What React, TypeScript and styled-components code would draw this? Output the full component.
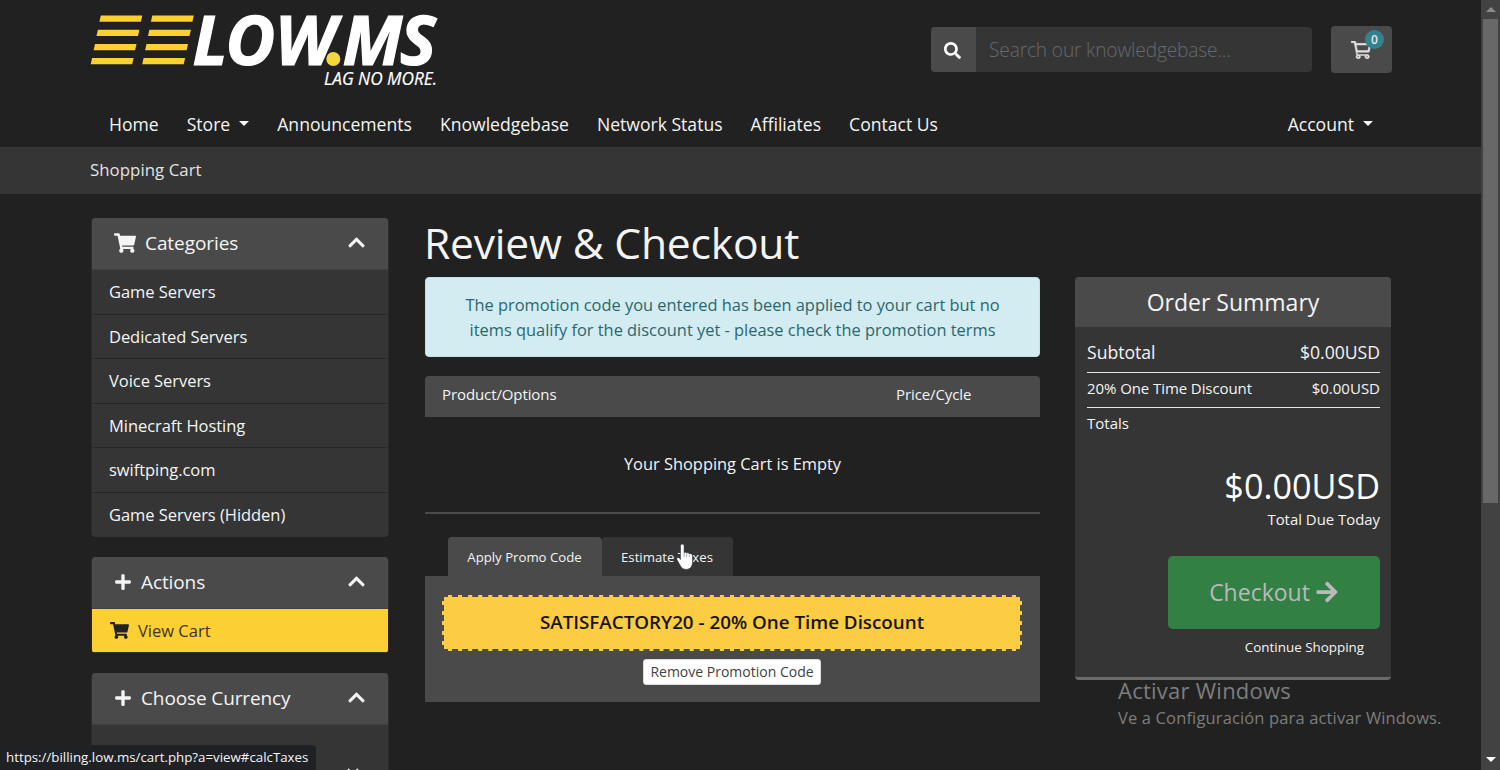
import React from "react";
import styled, { createGlobalStyle, css } from "styled-components";
import {
  FaArrowRight,
  FaChevronUp,
  FaPlus,
  FaSearch,
  FaShoppingCart,
} from "react-icons/fa";

const GlobalStyle = createGlobalStyle`
  *, *::before, *::after { box-sizing: border-box; }
  html, body { margin: 0; padding: 0; background: #212121; overflow: hidden; }
  body { font-family: "Open Sans", "Noto Sans", sans-serif; color: #f4f4f4; }
  h1, h2, p, ul { margin: 0; padding: 0; font-weight: 400; }
  button { font-family: inherit; margin: 0; }
`;

const Window = styled.div`
  position: relative;
  display: flex;
  width: 1500px;
  height: 770px;
  overflow: hidden;
`;

const Page = styled.div`
  flex: 1;
  min-width: 0;
  height: 770px;
  overflow: hidden;
`;

const Label = styled.span<{ $size: number; $track?: number; $weight?: number }>`
  font-size: ${(p) => p.$size}px;
  letter-spacing: ${(p) => p.$track ?? 0}px;
  font-weight: ${(p) => p.$weight ?? 400};
  white-space: nowrap;
`;

/* Header */
const Header = styled.header`
  height: 147px;
  padding: 0 89px 0 90px;
`;

const HeaderTop = styled.div`
  display: flex;
  height: 101px;
`;

const Logo = styled.svg`
  display: block;
  width: 352px;
  height: 96px;
  overflow: visible;
`;

const SearchBox = styled.div`
  display: flex;
  width: 381px;
  height: 45px;
  margin: 27px 19px 0 auto;
  border-radius: 4px;
  overflow: hidden;
  background: #353535;
`;

const SearchButton = styled.button`
  display: flex;
  align-items: center;
  justify-content: center;
  width: 45px;
  padding: 2px 2px 0 0;
  border: 0;
  background: #4a4a4a;
  color: #fff;
  font-size: 17px;
`;

const SearchInput = styled.div`
  flex: 1;
  padding-left: 13px;
  line-height: 45px;
  color: #64696e;
`;

const CartButton = styled.button`
  position: relative;
  width: 61px;
  height: 47px;
  margin-top: 26px;
  padding: 0;
  border: 0;
  border-radius: 4px;
  background: #4a4a4a;
`;

const CartOutline = styled.svg`
  display: block;
  width: 20px;
  height: 18px;
  margin: 0 0 0 20px;
  fill: #e2e2e2;
  stroke: #e2e2e2;
  stroke-width: 14px;
`;

const Badge = styled.span`
  position: absolute;
  left: 34px;
  top: 4px;
  width: 19px;
  height: 19px;
  border-radius: 10px;
  background: #35828f;
  color: #dcebed;
  font-size: 12px;
  font-weight: 600;
  line-height: 19px;
  text-align: center;
`;

const Nav = styled.nav`
  display: flex;
  align-items: center;
  gap: 28px;
  height: 46px;
  padding: 0 19px;
`;

const NavItem = styled.a<{ $end?: boolean }>`
  display: flex;
  align-items: center;
  line-height: 46px;
  ${(p) => p.$end && css`margin-left: auto;`}
`;

const Caret = styled.i`
  width: 0;
  height: 0;
  margin-left: 9px;
  margin-top: -1px;
  border: 5px solid transparent;
  border-top-color: #f4f4f4;
  border-bottom-width: 0;
`;

const Breadcrumb = styled.div`
  height: 47px;
  padding-left: 90px;
  background: #353535;
  color: #e3e3e3;
  line-height: 46px;
`;

/* Body */
const Body = styled.main`
  display: flex;
  align-items: flex-start;
  padding: 24px 0 0 91px;
`;

const Sidebar = styled.aside`
  display: flex;
  flex-direction: column;
  gap: 20px;
  width: 298px;
`;

const Card = styled.section<{ $height: number }>`
  flex: none;
  height: ${(p) => p.$height}px;
  border: solid #2b2b2b;
  border-width: 0 1px;
  border-radius: 4px;
  overflow: hidden;
  background: #353535;
`;

const CardHead = styled.div`
  display: flex;
  align-items: center;
  height: 52px;
  padding: 0 22px 2px 22px;
  border-bottom: 1px solid #414141;
  background: #4a4a4a;

  > svg:first-child { margin-right: 9px; }
  > svg:last-child { margin-left: auto; }
`;

const Entry = styled.div<{ $active?: boolean }>`
  display: flex;
  align-items: center;
  gap: 9px;
  height: 44.5px;
  padding: 0 17px;
  border-bottom: 1px solid #272727;
  ${(p) =>
    p.$active &&
    css`
      height: 43px;
      padding-left: 18px;
      border: 0;
      background: #fccf33;
      color: #3d3616;
      > svg { color: #222; }
    `}
  &:last-child { border-bottom: 0; }
`;

const SelectBox = styled.div`
  display: flex;
  justify-content: flex-end;
  padding: 42px 29px 0;
`;

const Center = styled.div`
  width: 615px;
  margin-left: 36px;
`;

const Title = styled.h1`
  height: 59px;
  margin-left: -1px;
  line-height: 48px;
  white-space: nowrap;
`;

const Alert = styled.div`
  display: flex;
  flex-direction: column;
  align-items: center;
  height: 80px;
  padding-top: 15px;
  border: 1px solid #bfe3ea;
  border-radius: 4px;
  background: #d2ecf1;
  color: #2b676e;
  line-height: 24.5px;
`;

const TableHead = styled.div`
  display: grid;
  grid-template-columns: 454px 1fr;
  height: 41px;
  margin-top: 19px;
  padding-left: 17px;
  border-radius: 4px 4px 0 0;
  background: #4a4a4a;
  line-height: 37px;
`;

const EmptyCart = styled.div`
  height: 97px;
  border-bottom: 2px solid #4a4a4a;
  line-height: 94px;
  text-align: center;
`;

const Tabs = styled.div`
  display: flex;
  height: 39px;
  margin-top: 23px;
  padding-left: 23px;
`;

const Tab = styled.div<{ $width: number; $active?: boolean }>`
  width: ${(p) => p.$width}px;
  padding-right: 1px;
  border-radius: 4px 4px 0 0;
  background: ${(p) => (p.$active ? "#4a4a4a" : "#353535")};
  line-height: 39px;
  text-align: center;
`;

const PromoPanel = styled.div`
  display: flex;
  flex-direction: column;
  align-items: center;
  gap: 8px;
  height: 126px;
  padding: 19px 1px 0 0;
  background: #4a4a4a;
`;

const PromoCode = styled.div`
  width: 580px;
  height: 56px;
  border: 2px dashed #4a4a4a;
  background: #fccc42;
  color: #171510;
  line-height: 51px;
  text-align: center;
`;

const RemoveButton = styled.button`
  width: 178px;
  height: 26px;
  padding: 0;
  border: 1px solid #ddd;
  border-radius: 3px;
  background: #fff;
  color: #3f3f3f;
  line-height: 22px;
`;

const Summary = styled.section`
  width: 316px;
  height: 403px;
  margin: 59px 0 0 35px;
  border-bottom: 3px solid #6b6b6b;
  border-radius: 4px;
  overflow: hidden;
  background: #353535;
`;

const SummaryTitle = styled.h2`
  height: 50px;
  background: #4a4a4a;
  line-height: 50px;
  text-align: center;
`;

const SummaryBody = styled.div`
  padding: 10px 11px 0 12px;
`;

const SummaryRow = styled.div<{ $height: number; $line: number }>`
  display: flex;
  justify-content: space-between;
  height: ${(p) => p.$height}px;
  border-bottom: 1px solid #e6e6e6;
  line-height: ${(p) => p.$line}px;
`;

const TotalsLabel = styled.div`
  height: 53px;
  line-height: 31px;
`;

const TotalDue = styled.div`
  display: flex;
  flex-direction: column;
  align-items: flex-end;
  height: 95px;

  > :first-child { line-height: 50px; color: #fff; }
  > :last-child { line-height: 17px; }
`;

const CheckoutButton = styled.button`
  display: flex;
  align-items: center;
  justify-content: center;
  gap: 5px;
  width: 212px;
  height: 73px;
  margin-left: auto;
  padding: 0 0 2px;
  border: 0;
  border-radius: 5px;
  background: #338045;
  color: #bababa;
`;

const ContinueLink = styled.div`
  padding-right: 16px;
  line-height: 35px;
  text-align: right;
`;

/* Overlays */
const Scrollbar = styled.div`
  display: flex;
  flex-direction: column;
  align-items: center;
  justify-content: space-between;
  width: 19px;
  height: 770px;
  padding: 7px 0 8px;
  background: #424242;
`;

const ScrollArrow = styled.i<{ $down?: boolean }>`
  width: 0;
  height: 0;
  border: 5px solid transparent;
  ${(p) =>
    p.$down
      ? css`border-top-color: #fff; border-bottom-width: 0;`
      : css`border-bottom-color: #8a8a8a; border-top-width: 0;`}
`;

const ScrollThumb = styled.div`
  width: 15px;
  height: 484px;
  margin: 7px 0 auto;
  background: #686868;
`;

const StatusBar = styled.div`
  position: absolute;
  left: 0;
  bottom: 0;
  width: 316px;
  height: 25px;
  padding-left: 6px;
  border-radius: 0 4px 0 0;
  background: #202125;
  color: #f5f5f5;
  line-height: 22px;
`;

const Watermark = styled.div`
  position: absolute;
  left: 1118px;
  top: 676px;
  display: flex;
  flex-direction: column;
  color: #7d7d7d;

  > :first-child { line-height: 28px; }
  > :last-child { line-height: 27px; }
`;

const Pointer = styled.svg`
  position: absolute;
  left: 676px;
  top: 543px;
  width: 18px;
  height: 28px;
`;

const categories: [string, number][] = [
  ["Game Servers", -0.05],
  ["Dedicated Servers", -0.06],
  ["Voice Servers", -0.05],
  ["Minecraft Hosting", -0.05],
  ["swiftping.com", -0.05],
  ["Game Servers (Hidden)", -0.04],
];

const barTops = [15.5, 29.8, 44, 58];

function LogoMark() {
  return (
    <Logo viewBox="90 0 352 96">
      {barTops.map((y, i) => (
        <g key={y} fill="#fccf33">
          <path d={`M${100.8 - i * 2.9} ${y}h41.500l-1.400 6.300h-41.500z`} />
          <path d={`M${152.3 - i * 2.9} ${y}h41.500l-1.400 6.300h-41.500z`} />
        </g>
      ))}
      <g fill="#fff" fontFamily="Open Sans, sans-serif" fontStyle="italic">
        <g fontSize="68" fontWeight="700" stroke="#fff" strokeWidth="1.2">
          <text x="192.500 225.500 275" y="64.800">LOW</text>
          <text x="342.500 400" y="64.800">MS</text>
        </g>
        <text x="324" y="85" fontSize="18" strokeWidth=".2" stroke="#fff" textLength="113" lengthAdjust="spacingAndGlyphs">LAG NO MORE.</text>
      </g>
      <circle cx="333.300" cy="59" r="7" fill="#f5d63d" />
    </Logo>
  );
}

export default function App() {
  return (
    <Window>
      <GlobalStyle />
      <Page>
        <Header>
          <HeaderTop>
            <LogoMark />
            <SearchBox>
              <SearchButton><FaSearch /></SearchButton>
              <SearchInput><Label $size={19.2} $track={-0.18} $weight={300}>Search our knowledgebase...</Label></SearchInput>
            </SearchBox>
            <CartButton>
              <CartOutline viewBox="0 0 576 512">
                <path d="M551.991 64H144.28l-8.726-44.608C133.35 8.128 123.478 0 112 0H12C5.373 0 0 5.373 0 12v24c0 6.627 5.373 12 12 12h80.24l69.594 355.701C150.796 415.201 144 430.802 144 448c0 35.346 28.654 64 64 64s64-28.654 64-64a63.681 63.681 0 0 0-8.583-32h145.167a63.681 63.681 0 0 0-8.583 32c0 35.346 28.654 64 64 64 35.346 0 64-28.654 64-64 0-17.993-7.435-34.24-19.388-45.868C506.022 391.891 496.76 384 485.328 384H189.28l-12.52-64h331.381c11.368 0 21.177-7.976 23.496-19.105l43.331-208C578.042 77.984 566.597 64 551.991 64zM208 472c-13.234 0-24-10.766-24-24s10.766-24 24-24 24 10.766 24 24-10.766 24-24 24zm256 0c-13.234 0-24-10.766-24-24s10.766-24 24-24 24 10.766 24 24-10.766 24-24 24zm23.438-200H184.98l-31.31-160h368.548l-34.78 160z" />
              </CartOutline>
              <Badge>0</Badge>
            </CartButton>
          </HeaderTop>
          <Nav>
            <NavItem><Label $size={17.58}>Home</Label></NavItem>
            <NavItem><Label $size={17.58}>Store</Label><Caret /></NavItem>
            <NavItem><Label $size={17.58}>Announcements</Label></NavItem>
            <NavItem><Label $size={17.58}>Knowledgebase</Label></NavItem>
            <NavItem><Label $size={17.58}>Network Status</Label></NavItem>
            <NavItem><Label $size={17.58}>Affiliates</Label></NavItem>
            <NavItem><Label $size={17.58}>Contact Us</Label></NavItem>
            <NavItem $end><Label $size={17.58}>Account</Label><Caret /></NavItem>
          </Nav>
        </Header>
        <Breadcrumb><Label $size={16.8} $track={0.06}>Shopping Cart</Label></Breadcrumb>
        <Body>
          <Sidebar>
            <Card $height={319}>
              <CardHead>
                <FaShoppingCart size={22} />
                <Label $size={19} $track={-0.08}>Categories</Label>
                <FaChevronUp size={19} />
              </CardHead>
              {categories.map(([name, track]) => (
                <Entry key={name}><Label $size={16.5} $track={track}>{name}</Label></Entry>
              ))}
            </Card>
            <Card $height={96}>
              <CardHead>
                <FaPlus size={18} />
                <Label $size={19} $track={-0.1}>Actions</Label>
                <FaChevronUp size={19} />
              </CardHead>
              <Entry $active><FaShoppingCart size={19} /><Label $size={16.5}>View Cart</Label></Entry>
            </Card>
            <Card $height={180}>
              <CardHead>
                <FaPlus size={18} />
                <Label $size={19} $track={-0.12}>Choose Currency</Label>
                <FaChevronUp size={19} />
              </CardHead>
              <SelectBox>
                <svg width="12" height="8" viewBox="0 0 12 8" fill="none" stroke="#ddd" strokeWidth="2"><path d="M1 2l5 5 5-5" /></svg>
              </SelectBox>
            </Card>
          </Sidebar>
          <Center>
            <Title><Label $size={42.6} $track={-0.22}>Review &amp; Checkout</Label></Title>
            <Alert>
              <Label $size={16.4}>The promotion code you entered has been applied to your cart but no</Label>
              <Label $size={16.4}>items qualify for the discount yet - please check the promotion terms</Label>
            </Alert>
            <TableHead>
              <Label $size={15} $track={-0.1}>Product/Options</Label>
              <Label $size={15} $track={-0.1}>Price/Cycle</Label>
            </TableHead>
            <EmptyCart><Label $size={16.4}>Your Shopping Cart is Empty</Label></EmptyCart>
            <Tabs>
              <Tab $width={154} $active><Label $size={13.2}>Apply Promo Code</Label></Tab>
              <Tab $width={131}><Label $size={13.2}>Estimate Taxes</Label></Tab>
            </Tabs>
            <PromoPanel>
              <PromoCode><Label $size={18.8} $weight={600}>SATISFACTORY20 - 20% One Time Discount</Label></PromoCode>
              <RemoveButton><Label $size={14}>Remove Promotion Code</Label></RemoveButton>
            </PromoPanel>
          </Center>
          <Summary>
            <SummaryTitle><Label $size={23}>Order Summary</Label></SummaryTitle>
            <SummaryBody>
              <SummaryRow $height={36} $line={31}>
                <Label $size={17.6}>Subtotal</Label><Label $size={17.6}>$0.00USD</Label>
              </SummaryRow>
              <SummaryRow $height={35} $line={31}>
                <Label $size={15} $track={-0.08}>20% One Time Discount</Label><Label $size={15}>$0.00USD</Label>
              </SummaryRow>
              <TotalsLabel><Label $size={15}>Totals</Label></TotalsLabel>
              <TotalDue>
                <Label $size={34.2}>$0.00USD</Label>
                <Label $size={14.9}>Total Due Today</Label>
              </TotalDue>
              <CheckoutButton><Label $size={23} $weight={500}>Checkout</Label><FaArrowRight size={24} /></CheckoutButton>
              <ContinueLink><Label $size={13.4}>Continue Shopping</Label></ContinueLink>
            </SummaryBody>
          </Summary>
        </Body>
      </Page>
      <Scrollbar>
        <ScrollArrow />
        <ScrollThumb />
        <ScrollArrow $down />
      </Scrollbar>
      <Watermark>
        <Label $size={22} $track={0.25}>Activar Windows</Label>
        <Label $size={16.5} $track={0.14}>Ve a Configuración para activar Windows.</Label>
      </Watermark>
      <StatusBar><Label $size={13.3}>https://billing.low.ms/cart.php?a=view#calcTaxes</Label></StatusBar>
      <Pointer viewBox="0 0 18 28">
        <path d="M4.500 3.200c0-2.800 3.600-2.800 3.600 0v6.600c.6-1 2.300-.8 2.500.4.8-.8 2.400-.5 2.600.7 1.200-.7 3.300 0 3.300 1.700v6.400c0 4-2 7.400-6.200 7.400-3.700 0-4.800-1.600-6.500-4.600L1 16.800c-1-2.200 1.200-3.200 2.500-1.500l1 1.200z" fill="#fff" stroke="#333" strokeWidth=".6" />
        <path d="M8.100 10v4M10.700 11v3M13.300 12v2" stroke="#777" strokeWidth=".6" />
      </Pointer>
    </Window>
  );
}
